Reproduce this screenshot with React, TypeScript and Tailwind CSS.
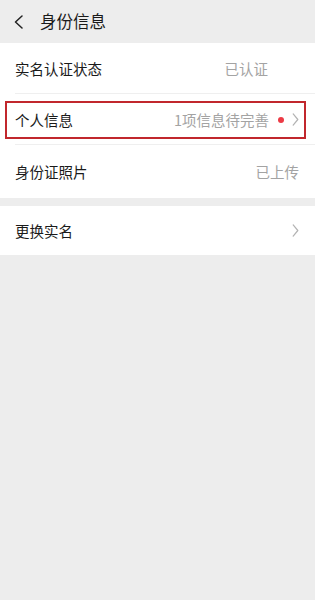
import React from 'react';

const Chevron: React.FC<{ className?: string }> = ({ className }) => (
  <svg viewBox="0 0 7 14" className={className} fill="none" stroke="currentColor" strokeWidth="1.3" strokeLinecap="round" strokeLinejoin="round">
    <path d="M1 1l5 6-5 6" />
  </svg>
);

type RowProps = {
  label: string;
  value?: string;
  valueClass?: string;
  dot?: boolean;
  arrow?: boolean;
  border?: boolean;
  highlight?: boolean;
  h?: string;
};

const Row: React.FC<RowProps> = ({ label, value, valueClass = '', dot, arrow, border, highlight, h = 'h-[51px]' }) => (
  <div className={`relative flex items-center ${h} pl-[15px] pr-[16px]`}>
    <span className="text-[14.5px] text-[#1a1a1a]">{label}</span>
    <div className="ml-auto flex items-center">
      {value && <span className={`text-[14.5px] text-[#a3a3a3] ${valueClass}`}>{value}</span>}
      {dot && <span className="ml-[9px] w-[6px] h-[6px] rounded-full bg-[#ec3a45]" />}
      {arrow && <Chevron className={`${value ? 'ml-[8px]' : ''} w-[7px] h-[13px] text-[#b3b3b3]`} />}
    </div>
    {border && <div className="absolute left-[15px] right-0 bottom-0 h-px bg-[#efefef]" />}
    {highlight && (
      <div className="absolute left-[5px] right-[9px] top-[7px] bottom-[6px] border-[2.5px] border-[#c1272d] pointer-events-none" />
    )}
  </div>
);

export default function App() {
  return (
    <div
      className="min-h-[600px] w-[315px] bg-[#ededed]"
      style={{ fontFamily: '"Noto Sans CJK SC", "Noto Sans", sans-serif' }}
    >
      <header className="h-[43px] flex items-center pl-[14px]">
        <svg viewBox="0 0 9 14" className="w-[9px] h-[14px] text-[#222]" fill="none" stroke="currentColor" strokeWidth="1.5" strokeLinecap="round" strokeLinejoin="round">
          <path d="M8 1L1.5 7 8 13" />
        </svg>
        <h1 className="ml-[17px] text-[16.5px] font-normal text-[#1a1a1a]">身份信息</h1>
      </header>

      <section className="bg-white">
        <Row label="实名认证状态" value="已认证" valueClass="mr-[31px]" border h="h-[51px]" />
        <Row label="个人信息" value="1项信息待完善" dot arrow border highlight h="h-[51px]" />
        <Row label="身份证照片" value="已上传" h="h-[53px]" />
      </section>

      <section className="bg-white mt-[8px]">
        <Row label="更换实名" arrow h="h-[49px]" />
      </section>
    </div>
  );
}
